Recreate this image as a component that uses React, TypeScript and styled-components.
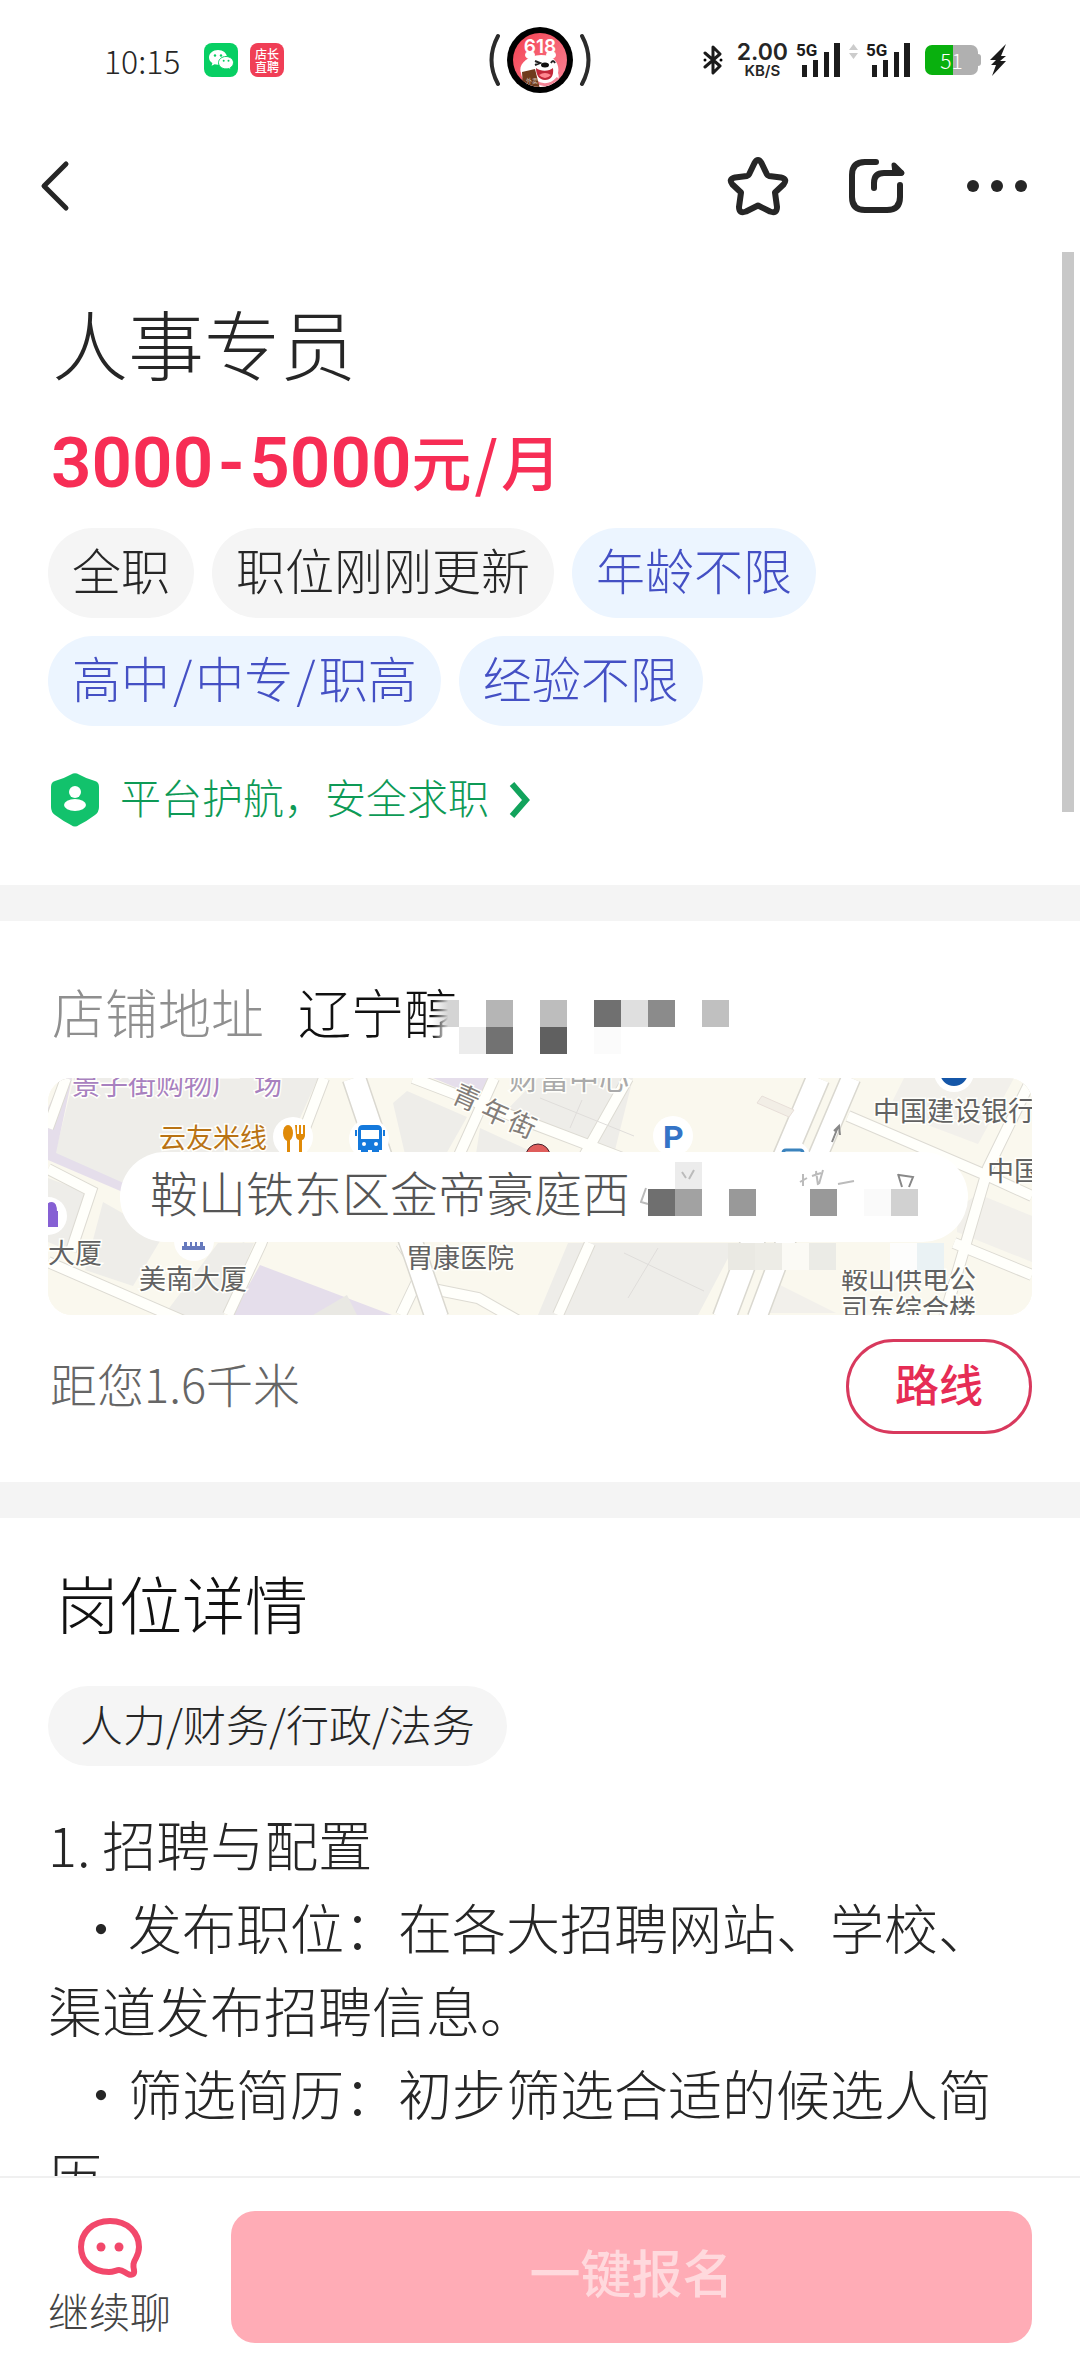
import React from "react";
import styled, { createGlobalStyle } from "styled-components";

const GlobalStyle = createGlobalStyle`
  * { box-sizing: border-box; }
  body { margin: 0; background: #fff; }
  button { appearance: none; border: 0; padding: 0; background: none; font: inherit; color: inherit; cursor: pointer; }
  h1, h2, p { margin: 0; font-weight: 300; }
  svg { display: block; flex: none; }
`;

const Screen = styled.div`
  position: relative;
  display: flex;
  flex-direction: column;
  height: 100vh;
  overflow: hidden;
  background: #fff;
  color: #262626;
  font-family: "Noto Sans CJK SC", sans-serif;
  font-weight: 300;
`;

const StatusBar = styled.header`
  display: grid;
  grid-template-columns: 1fr auto 1fr;
  align-items: center;
  flex: none;
  height: 120px;
  padding: 0 72px 0 104px;
`;
const StatusGroup = styled.div<{ $end?: boolean }>`
  display: flex;
  align-items: center;
  justify-content: ${(p) => (p.$end ? "flex-end" : "flex-start")};
  gap: ${(p) => (p.$end ? "8px" : "12px")};
`;
const StatusIsland = styled.div`
  margin-right: 32px;
`;
const Clock = styled.time`
  width: 88px;
  font-size: 32px;
  line-height: 40px;
  white-space: nowrap;
`;
const AppBadge = styled.span<{ $color: string }>`
  display: grid;
  place-items: center;
  width: 34px;
  height: 34px;
  border-radius: 8px;
  background: ${(p) => p.$color};
  color: #fff;
  font-size: 12px;
  line-height: 13px;
  font-weight: 500;
  text-align: center;
`;
const Speed = styled.div`
  display: flex;
  flex-direction: column;
  align-items: center;
  padding-left: 6px;
  font-family: Inter, sans-serif;
  font-weight: 600;
  font-size: 23px;
  line-height: 21px;
`;
const SpeedUnit = styled.small`
  font-size: 15px;
  line-height: 15px;
`;
const Battery = styled.div`
  display: flex;
  align-items: center;
  padding-left: 6px;
`;
const BatteryBody = styled.span`
  width: 53px;
  height: 30px;
  border-radius: 7px;
  background: linear-gradient(90deg, #09b00e 52%, #b0b0b0 52%);
  color: #fff;
  font-size: 21px;
  line-height: 30px;
  text-align: center;
`;
const BatteryTip = styled.span`
  width: 3px;
  height: 12px;
  border-radius: 0 3px 3px 0;
  background: #b0b0b0;
`;

const NavBar = styled.nav`
  display: flex;
  align-items: center;
  justify-content: space-between;
  flex: none;
  height: 132px;
  padding: 0 48px 0 32px;
`;
const NavActions = styled.div`
  display: flex;
  align-items: center;
  gap: 56px;
`;
const IconButton = styled.button`
  display: grid;
  place-items: center;
  height: 72px;
`;

const Content = styled.main`
  flex: 1;
  min-height: 0;
  overflow: hidden;
`;
const Section = styled.section`
  padding: 0 48px;
`;
const Divider = styled.hr`
  height: 36px;
  margin: 0;
  border: 0;
  background: #f4f4f4;
`;
const ScrollThumb = styled.div`
  position: absolute;
  top: 252px;
  right: 6px;
  width: 12px;
  height: 560px;
  background: #c8c8c8;
`;

const Summary = styled(Section)`
  padding-top: 42px;
  padding-bottom: 56px;
`;
const JobTitle = styled.h1`
  padding-left: 4px;
  font-size: 76px;
  line-height: 96px;
`;
const Salary = styled.p`
  display: flex;
  align-items: center;
  margin-top: 27px;
  padding-left: 3px;
  color: #f72d55;
  font-family: Roboto, "Noto Sans CJK SC", sans-serif;
  font-size: 71px;
  font-weight: 600;
  line-height: 92px;
`;
const Dash = styled.span`
  margin: 0 5px;
`;
const SalaryUnit = styled.span`
  padding-bottom: 6px;
  font-family: "Noto Sans CJK SC", sans-serif;
  font-size: 60px;
  font-weight: 500;
  line-height: 86px;
`;
const TagList = styled.ul`
  display: flex;
  flex-wrap: wrap;
  gap: 18px;
  margin: 19px 0 0;
  padding: 0;
  list-style: none;
`;
const Tag = styled.li<{ $accent?: boolean }>`
  padding: 0 24px 8px;
  border-radius: 45px;
  background: ${(p) => (p.$accent ? "#ecf5ff" : "#f5f5f5")};
  color: ${(p) => (p.$accent ? "#4450c4" : "#262626")};
  font-size: 49px;
  line-height: 82px;
`;
const Slash = styled.span`
  margin: 0 3px;
`;
const SafetyLink = styled.a`
  display: flex;
  align-items: center;
  margin-top: 45px;
  padding-left: 2px;
  color: #0d9a56;
  font-size: 41px;
  line-height: 50px;
  text-decoration: none;
`;
const SafetyText = styled.span`
  padding: 0 20px 8px;
`;

const Location = styled(Section)`
  padding-top: 60px;
  padding-bottom: 48px;
`;
const AddressRow = styled.div`
  display: flex;
  align-items: center;
  height: 72px;
  padding-bottom: 12px;
  font-size: 53px;
  line-height: 60px;
  color: #111;
`;
const AddressLabel = styled.span`
  width: 250px;
  padding-left: 4px;
  color: #8f8f8f;
`;
const AddressValue = styled.span`
  position: relative;
`;
const Mosaic = styled.svg<{ $left: number; $top: number }>`
  position: absolute;
  left: ${(p) => p.$left}px;
  top: ${(p) => p.$top}px;
`;
const MapCard = styled.div`
  position: relative;
  display: flex;
  align-items: center;
  height: 237px;
  margin-top: 25px;
  padding: 0 64px 0 72px;
  border-radius: 24px;
  overflow: hidden;
  background: #faf8ee;
`;
const MapArt = styled.svg`
  position: absolute;
  inset: 0;
  width: 100%;
  height: 100%;
`;
const MapBubble = styled.div`
  position: relative;
  flex: 1;
  padding: 0 0 12px 30px;
  border-radius: 45px;
  background: #fff;
  color: #555;
  font-size: 48px;
  line-height: 78px;
  white-space: nowrap;
`;
const DistanceRow = styled.div`
  display: flex;
  align-items: center;
  justify-content: space-between;
  margin-top: 24px;
  padding-left: 2px;
  color: #666;
  font-size: 47px;
`;
const Distance = styled.span`
  padding-bottom: 8px;
`;
const RouteButton = styled.button`
  width: 186px;
  height: 95px;
  padding-bottom: 8px;
  border: 3px solid #d8395d;
  border-radius: 48px;
  color: #e62c55;
  font-size: 44px;
  font-weight: 500;
  line-height: 66px;
`;

const Details = styled(Section)`
  padding-top: 38px;
`;
const DetailsTitle = styled.h2`
  padding-left: 8px;
  color: #111;
  font-size: 63px;
  line-height: 92px;
`;
const CategoryChip = styled.div`
  display: inline-block;
  margin-top: 38px;
  padding: 0 32px 6px;
  border-radius: 40px;
  background: #f5f5f5;
  font-size: 43px;
  line-height: 74px;
`;
const Description = styled.div`
  margin-top: 36px;
  font-size: 54px;
  line-height: 83px;
`;
const Bullet = styled.span`
  display: inline-block;
  width: 80px;
  padding-left: 26px;
`;

const Footer = styled.footer`
  display: flex;
  flex: none;
  gap: 60px;
  padding: 33px 48px;
  border-top: 2px solid #f0f0f0;
  background: #fff;
`;
const ChatButton = styled.button`
  display: flex;
  flex-direction: column;
  align-items: center;
  width: 123px;
  padding-top: 5px;
  color: #444;
  font-size: 41px;
  line-height: 60px;
`;
const ApplyButton = styled.button`
  flex: 1;
  height: 132px;
  padding-bottom: 12px;
  border-radius: 24px;
  background: #ffacb6;
  color: #ffd9dd;
  font-size: 51px;
  font-weight: 500;
`;

type Cell = [number, number, string];

const CELL = 27;
const addressCells: Cell[] = [
  [0, 0, "url(#fadeGrey)"], [2, 0, "#b5b5b5"], [4, 0, "#bdbdbd"], [6, 0, "#707070"],
  [7, 0, "#dfdfdf"], [8, 0, "#8b8b8b"], [10, 0, "#c0c0c0"],
  [0, 1, "url(#fadeWhite)"], [1, 1, "#ececec"], [2, 1, "#727272"], [4, 1, "#606060"], [6, 1, "#fbfbfb"],
];
const bubbleCells: Cell[] = [
  [1, 0, "#ececec"], [0, 1, "#6f6f6f"], [1, 1, "#a2a2a2"], [3, 1, "#999999"],
  [6, 1, "#999999"], [8, 1, "#fafafa"], [9, 1, "#d1d1d1"],
];
const mapCells: Cell[] = [
  [0, 0, "#eae9e3"], [1, 0, "#edece6"], [2, 0, "#fbfaf5"], [3, 0, "#ebebe6"],
  [4, 0, "#faf8ee"], [5, 0, "#faf8ee"], [6, 0, "#fdfdfc"], [7, 0, "#eaf2f4"],
];

const Cells = ({ cells }: { cells: Cell[] }) => (
  <>
    {cells.map(([col, row, fill]) => (
      <rect key={`${col}-${row}`} x={col * CELL} y={row * CELL} width={CELL} height={CELL} fill={fill} />
    ))}
  </>
);

const WechatIcon = () => (
  <svg width="26" height="24" viewBox="0 0 26 24">
    <path d="M10 2C5 2 1 5.300 1 9.400c0 2.400 1.300 4.400 3.400 5.700L3.600 17.700l3-1.500c1 .300 2.200.500 3.400.500 5 0 9-3.300 9-7.400S15 2 10 2z" fill="#fff" />
    <path d="M18 8.500c-4.200 0-7.500 2.800-7.500 6.200s3.300 6.200 7.500 6.200c.900 0 1.800-.100 2.600-.400l2.500 1.300-.700-2.200c1.900-1.100 3.100-2.900 3.100-4.900 0-3.400-3.300-6.200-7.500-6.200z" fill="#fff" stroke="#07cf63" />
    <g fill="#07cf63"><circle cx="7" cy="7.500" r="1.200" /><circle cx="13" cy="7.500" r="1.200" /><circle cx="15.700" cy="12.800" r="1" /><circle cx="20.500" cy="12.800" r="1" /></g>
  </svg>
);

const IslandIcon = () => (
  <svg width="102" height="68" viewBox="0 0 102 68">
    <defs>
      <linearGradient id="island" x1="0" x2="1" y2="1"><stop stopColor="#f43d4d" /><stop offset="1" stopColor="#f9889a" /></linearGradient>
      <clipPath id="disc"><circle cx="51" cy="34" r="27" /></clipPath>
    </defs>
    <path d="M9 10Q-4 34 9 58M93 10q13 24 0 48" fill="none" stroke="#2b2b2b" strokeWidth="4" strokeLinecap="round" />
    <circle cx="51" cy="34" r="33" fill="#000" />
    <g clipPath="url(#disc)">
      <rect x="22" y="5" width="58" height="58" fill="url(#island)" />
      <path d="M32 47c-3-7 4-17 20-18 14 0 19 10 17 18 3 8-4 16-16 16-13 0-20-8-21-16z" fill="#fff" />
      <ellipse cx="41" cy="29" rx="5" ry="4" fill="#fff" /><ellipse cx="62" cy="29" rx="5" ry="4" fill="#fff" />
      <path d="M47 42c5 4 14 3 17 0 1 8-2 12-8 12s-9-5-9-12z" fill="#c22739" /><path d="M50 49q6-4 12 0-6 6-12 0z" fill="#ff8790" />
      <path d="M46 35l5 2-5 2M62 37q2-4 4 0" fill="none" stroke="#222" strokeWidth="2" />
      <ellipse cx="56" cy="39" rx="4" ry="2.500" fill="#111" />
      <path d="M47 56q12 7 22-4" fill="none" stroke="#f38597" strokeWidth="3" />
      <path d="M33 46l13-3 5 20H34z" fill="#6f3b1c" />
    </g>
    <text x="51" y="27" textAnchor="middle" fill="#fff" fontFamily="Inter, sans-serif" fontSize="19" fontWeight="600">618</text>
    <text x="37" y="57" fill="#fff" fontSize="6">外卖</text>
  </svg>
);

const BluetoothIcon = () => (
  <svg width="20" height="32" viewBox="0 0 20 32">
    <path d="M2 9l15 13-7 7V3l7 7L2 23" fill="none" stroke="#1b1b1b" strokeWidth="3" strokeLinejoin="round" strokeLinecap="round" />
    <circle cx="2" cy="16" r="1.500" /><circle cx="18" cy="16" r="1.500" />
  </svg>
);

const SignalIcon = () => (
  <svg width="45" height="44" viewBox="0 -4 45 44">
    <text x="0" y="14" fill="#1b1b1b" fontFamily="Roboto, sans-serif" fontSize="17" fontWeight="700">5G</text>
    <path d="M6 23h5v12H6zM17 18h5v17h-5zM28 10h5v25h-5zM38 1h6v34h-6z" fill="#1b1b1b" />
  </svg>
);

const RoamArrows = () => (
  <svg width="9" height="36" viewBox="0 0 9 36"><path d="M0 8l4.500-6L9 8zM0 11h9l-4.500 6z" fill="#ccc" /></svg>
);

const BoltIcon = () => (
  <svg width="19" height="34" viewBox="0 0 19 34"><path d="M17 1L1 17h6l-5 5h5L3 33l14-15h-6l6-5h-5z" fill="#1b1b1b" /></svg>
);

const BackIcon = () => (
  <svg width="44" height="60" viewBox="0 0 44 60"><path d="M34 8L12 30l22 22" fill="none" stroke="#262626" strokeWidth="5" strokeLinecap="round" strokeLinejoin="round" /></svg>
);
const StarIcon = () => (
  <svg width="64" height="64" viewBox="0 0 64 64">
    <path d="M28.500 9Q32 3 35.500 9L41 20.500Q41.500 21.500 43 22L55 23.500Q62 25 57.500 30.500L49 38.500 51 53Q51 60 44 57.500L32 51.500 20 57.500Q13 60 13 53L15 38.500 6.500 30.500Q2 25 9 23.500L21 22Q22.500 21.500 23 20.500Z" fill="none" stroke="#262626" strokeWidth="6" strokeLinejoin="round" />
  </svg>
);
const ShareIcon = () => (
  <svg width="60" height="60" viewBox="0 0 60 60">
    <path d="M30 6H19Q6 6 6 19v22q0 13 13 13h22q13 0 13-13V29" fill="none" stroke="#262626" strokeWidth="6" strokeLinecap="round" />
    <path d="M28 32v-5q0-10 10-10h17" fill="none" stroke="#262626" strokeWidth="6" strokeLinecap="round" />
    <path d="M48 9l8 8h-7z" fill="#262626" stroke="#262626" strokeWidth="5" strokeLinejoin="round" />
  </svg>
);
const MoreIcon = () => (
  <svg width="70" height="60" viewBox="0 0 70 60" fill="#262626"><circle cx="11" cy="30" r="6" /><circle cx="35" cy="30" r="6" /><circle cx="59" cy="30" r="6" /></svg>
);
const ShieldIcon = () => (
  <svg width="50" height="56" viewBox="0 0 50 56">
    <path d="M21 2.500q4-2.500 8 0Q37 7 45 9q4 1 4 6v20q0 5-4 8-8 6-16 10-4 3-8 0-8-4-16-10-4-3-4-8V15q0-5 4-6 8-2 16-6.500z" fill="#12c26c" />
    <circle cx="25" cy="20" r="6" fill="#fff" /><ellipse cx="25" cy="33" rx="11" ry="6" fill="#fff" />
  </svg>
);
const ChevronIcon = () => (
  <svg width="22" height="40" viewBox="0 0 22 40"><path d="M3 4l14 16L3 36" fill="none" stroke="#12a35c" strokeWidth="6" /></svg>
);
const ChatIcon = () => (
  <svg width="68" height="64" viewBox="0 0 68 64">
    <path d="M34 5C16 5 5 17 5 31S16 56 33 56C38 56 40 54 43 54C47 54 49 57 53 58.500Q59 60 58 54C57 49 57 47 60 42C62 38 63 35 63 31C63 17 52 5 34 5Z" fill="none" stroke="#f2486b" strokeWidth="6" strokeLinejoin="round" />
    <circle cx="25" cy="31" r="4.500" fill="#f2486b" /><circle cx="43" cy="31" r="4.500" fill="#f2486b" />
  </svg>
);

const StreetMap = () => (
  <MapArt viewBox="0 0 984 237" preserveAspectRatio="xMidYMid slice" fontFamily="Noto Sans CJK SC, sans-serif" fontSize="27" fontWeight="400">
    <rect width="984" height="237" fill="#faf8ee" />
    <g fill="#eeede9">
      <path d="M26 0H270L196 165 7 76zM0 100l42 16-18 58-24-10zM55 124l60 34-30 50-48-16zM345 25l14-12 60 26-34 60-25-10zM490 0h95l-20 80-110-44zM432 50l55 25-10 14H426zM520 165h168l-38 72H490zM170 165h36l-30 72h-60z" />
      <path d="M856 0h110l-36 66-90-34zM910 130l20-14 54 22v46l-75-30zM728 205l60 30h-70z" opacity=".7" />
    </g>
    <path d="M14 0h10L8 75l72 32-3 8L0 82V30zM385 0h60l-12 20zM212 187l132 50H184z" fill="#e5deeb" />
    <path d="M265 237l34-20 10 20z" fill="#e9e8e3" />
    <g fill="none" stroke="#dddbd3" strokeWidth="12">
      <path d="M276 0L213 166 180 237M0 91l43 22-20 60M0 184l138 60M446 0l-38 84M365 0l220 84M580 0l-45 80M353 165l20 30-20 42M542 165l-32 72M380 210l50 10 60 34M984 0l-44 90-44 150M800 38l140 60 44 20M906 165l78 32M0 50L18 0" />
    </g>
    <g fill="none" stroke="#fffffb" strokeWidth="10">
      <path d="M276 0L213 166 180 237M0 91l43 22-20 60M0 184l138 60M446 0l-38 84M365 0l220 84M580 0l-45 80M353 165l20 30-20 42M542 165l-32 72M380 210l50 10 60 34M984 0l-44 90-44 150M800 38l140 60 44 20M906 165l78 32M0 50L18 0" />
    </g>
    <g fill="none">
      <path d="M306 0l27 80 32 90 24 70M770 0l-34 80-60 160" stroke="#dad8d0" strokeWidth="25" />
      <path d="M306 0l27 80 32 90 24 70M770 0l-34 80-60 160" stroke="#fff" strokeWidth="22" />
      <path d="M803 0l-34 80-60 160" stroke="#dad8d0" strokeWidth="21" />
      <path d="M803 0l-34 80-60 160" stroke="#fff" strokeWidth="18" />
      <path d="M492 20l94 38M534 22l-12 28M576 175l80 38M610 170l-30 50" stroke="#dfddda" />
    </g>
    <path d="M714 18l32 14-5 7-32-14z" fill="#f2eee6" stroke="#e7ded8" />
    <path d="M784 64l6-15M786 53l5-5 1 9" stroke="#888" strokeWidth="2" fill="none" />
    <g fill="#fff">
      <circle cx="245" cy="59" r="20" /><circle cx="321" cy="61" r="20" /><circle cx="625" cy="58" r="20" /><circle cx="0" cy="138" r="19" /><circle cx="146" cy="163" r="20" /><circle cx="745" cy="80" r="17" /><circle cx="906" cy="-6" r="20" />
    </g>
    <circle cx="906" cy="-6" r="14" fill="#1456a8" />
    <g fill="#e08a08"><ellipse cx="240" cy="55" rx="5" ry="8" /><path d="M239 60h3v15h-3zM247 47h2v9h2v-9h2v9h2v-9h2v11q-1 4-3 4v13h-3V62q-3-1-3-4z" /></g>
    <path d="M311 52q0-4 4-4h14q4 0 4 4v19h-3v4h-5v-4h-6v4h-5v-4h-3zM308 52v6M336 52v6" fill="#1479dc" stroke="#1479dc" strokeWidth="2" />
    <path d="M313 52h18v9h-18z" fill="#fff" /><circle cx="316" cy="66" r="2" fill="#fff" /><circle cx="328" cy="66" r="2" fill="#fff" />
    <path d="M735 80v-5q0-3 3-3h14q3 0 3 3v5" fill="none" stroke="#3b83bd" strokeWidth="3" />
    <path d="M0 134h9v14H0zM0 134v-6q0-3 4-3t4 9" fill="#8660d4" stroke="#8660d4" strokeWidth="2" />
    <path d="M136 158h19v10h2v4h-23v-4h2z" fill="#6679bd" /><path d="M139 164h3v4h-3zM144 164h3v4h-3zM149 164h3v4h-3z" fill="#fff" />
    <circle cx="490" cy="78" r="12" fill="#df5d5b" stroke="#43212a" />
    <text x="615" y="70" fontFamily="Roboto, sans-serif" fontWeight="700" fontSize="32" fill="#3474c7">P</text>
    <g stroke="#fffffb" strokeWidth="3" paintOrder="stroke" fill="#626262">
      <text x="24" y="17" fontSize="28" fill="#a881bf">景子街购物广</text><text x="206" y="17" fontSize="28" fill="#a881bf">场</text>
      <text x="111" y="70" fill="#b97314">云友米线</text>
      <text x="461" y="11" fill="#aaa" fontSize="30">财富中心</text>
      <text x="825" y="43">中国建设银行</text><text x="939" y="103">中国</text>
      <text x="0" y="185">大厦</text><text x="91" y="211">美南大厦</text><text x="358" y="190">胃康医院</text>
      <text x="793" y="211">鞍山供电公<tspan x="793" dy="30">司东综合楼</tspan></text>
      <g fill="#837d79"><text transform="translate(402 23) rotate(24)">青</text><text transform="translate(431 38) rotate(24)">年</text><text transform="translate(458 50) rotate(24)">街</text></g>
    </g>
    <g transform="translate(680 165)"><Cells cells={mapCells} /></g>
  </MapArt>
);

export default function App() {
  return (
    <>
      <GlobalStyle />
      <Screen>
        <StatusBar>
          <StatusGroup>
            <Clock>10:15</Clock>
            <AppBadge $color="#07cf63"><WechatIcon /></AppBadge>
            <AppBadge $color="#f03e56">店长<br />直聘</AppBadge>
          </StatusGroup>
          <StatusIsland><IslandIcon /></StatusIsland>
          <StatusGroup $end>
            <BluetoothIcon />
            <Speed>2.00<SpeedUnit>KB/S</SpeedUnit></Speed>
            <SignalIcon />
            <RoamArrows />
            <SignalIcon />
            <Battery><BatteryBody>51</BatteryBody><BatteryTip /></Battery>
            <BoltIcon />
          </StatusGroup>
        </StatusBar>

        <NavBar>
          <IconButton aria-label="返回"><BackIcon /></IconButton>
          <NavActions>
            <IconButton aria-label="收藏"><StarIcon /></IconButton>
            <IconButton aria-label="分享"><ShareIcon /></IconButton>
            <IconButton aria-label="更多"><MoreIcon /></IconButton>
          </NavActions>
        </NavBar>

        <Content>
          <Summary>
            <JobTitle>人事专员</JobTitle>
            <Salary>
              3000<Dash>-</Dash>5000
              <SalaryUnit>元<Slash>/</Slash>月</SalaryUnit>
            </Salary>
            <TagList>
              <Tag>全职</Tag>
              <Tag>职位刚刚更新</Tag>
              <Tag $accent>年龄不限</Tag>
              <Tag $accent>高中<Slash>/</Slash>中专<Slash>/</Slash>职高</Tag>
              <Tag $accent>经验不限</Tag>
            </TagList>
            <SafetyLink href="#safety">
              <ShieldIcon />
              <SafetyText>平台护航，安全求职</SafetyText>
              <ChevronIcon />
            </SafetyLink>
          </Summary>
          <Divider />

          <Location>
            <AddressRow>
              <AddressLabel>店铺地址</AddressLabel>
              <AddressValue>
                辽宁醇
                <Mosaic $left={134} $top={19} width="300" height="54">
                  <defs>
                    <linearGradient id="fadeGrey"><stop stopColor="#d4d4d4" stopOpacity="0" /><stop offset=".6" stopColor="#d4d4d4" /></linearGradient>
                    <linearGradient id="fadeWhite"><stop stopColor="#fff" stopOpacity="0" /><stop offset=".6" stopColor="#fff" /></linearGradient>
                  </defs>
                  <Cells cells={addressCells} />
                </Mosaic>
              </AddressValue>
            </AddressRow>
            <MapCard>
              <StreetMap />
              <MapBubble>
                鞍山铁东区金帝豪庭西
                <Mosaic $left={520} $top={10} width="290" height="54">
                  <g transform="translate(8 0)"><Cells cells={bubbleCells} /></g>
                  <g fill="none" stroke="#bbb" strokeWidth="2">
                    <path d="M6 26L1 40l7 2" />
                    <path d="M42 10l4 6M54 8l-5 9M163 12v12M167 16l-7 4M176 9l2 14M172 14l9-3M183 8l-4 14M198 22l16-3" />
                    <path d="M258 12l4 13M259 13l14 2-4 10" stroke="#888" />
                  </g>
                </Mosaic>
              </MapBubble>
            </MapCard>
            <DistanceRow>
              <Distance>距您1.6千米</Distance>
              <RouteButton>路线</RouteButton>
            </DistanceRow>
          </Location>
          <Divider />

          <Details>
            <DetailsTitle>岗位详情</DetailsTitle>
            <CategoryChip>人力/财务/行政/法务</CategoryChip>
            <Description>
              <p>1. 招聘与配置</p>
              <p><Bullet>·</Bullet>发布职位：在各大招聘网站、学校、渠道发布招聘信息。</p>
              <p><Bullet>·</Bullet>筛选简历：初步筛选合适的候选人简历</p>
            </Description>
          </Details>
        </Content>

        <Footer>
          <ChatButton><ChatIcon />继续聊</ChatButton>
          <ApplyButton>一键报名</ApplyButton>
        </Footer>
        <ScrollThumb />
      </Screen>
    </>
  );
}
